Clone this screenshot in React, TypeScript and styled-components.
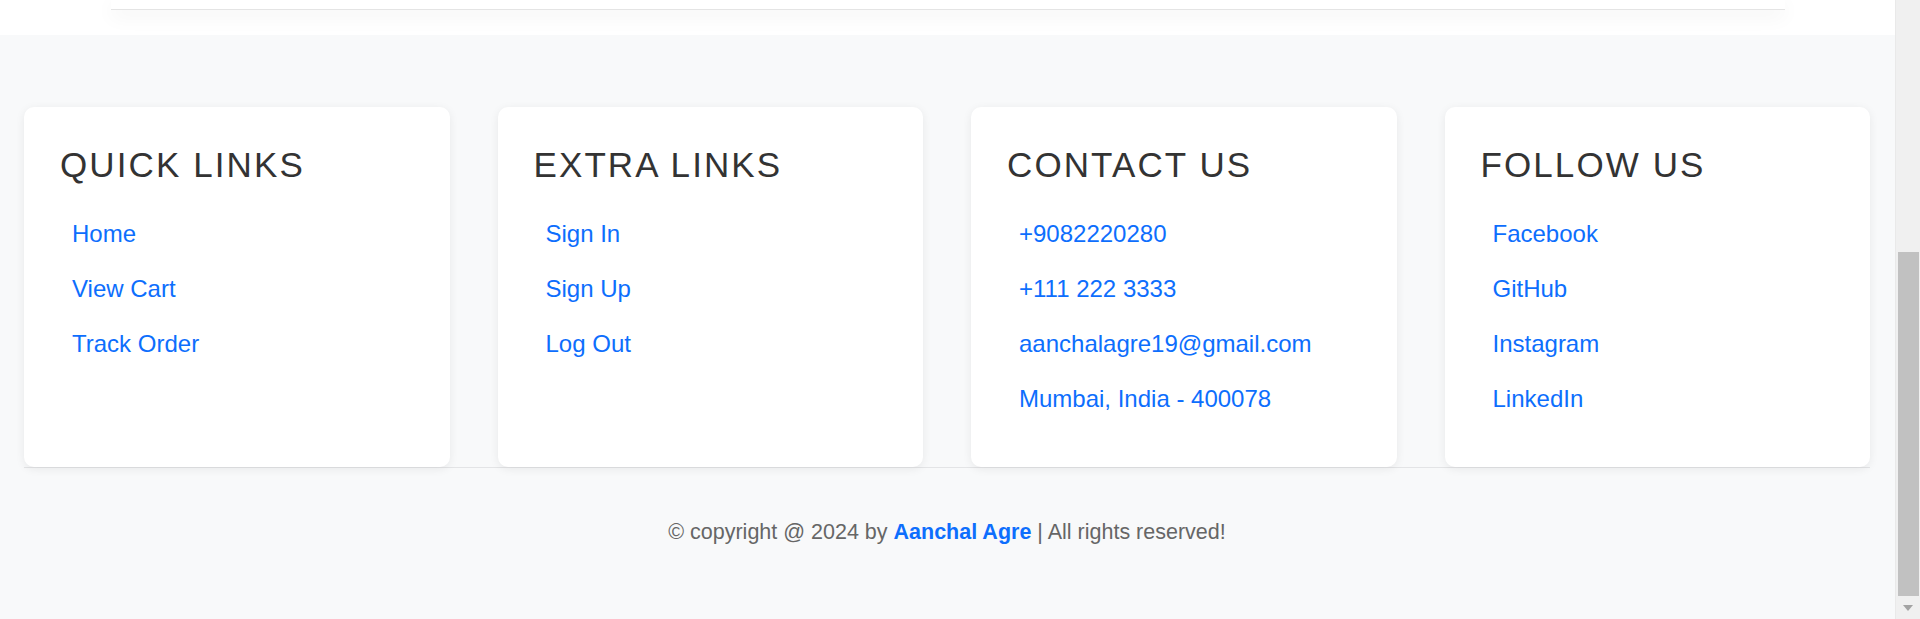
import { createGlobalStyle, styled } from "styled-components"

const GlobalStyle = createGlobalStyle`
  * { box-sizing: border-box; }
  body {
    margin: 0;
    overflow: hidden;
    font-family: "Liberation Sans", Arial, sans-serif;
  }
`

const columns = [
  { title: "quick links", links: ["Home", "View Cart", "Track Order"] },
  { title: "extra links", links: ["Sign In", "Sign Up", "Log Out"] },
  {
    title: "contact us",
    links: ["+9082220280", "+111 222 3333", "aanchalagre19@gmail.com", "Mumbai, India - 400078"],
  },
  { title: "follow us", links: ["Facebook", "GitHub", "Instagram", "LinkedIn"] },
]

export default () => {
  return (
    <>
      <GlobalStyle />
      <Page>
        <Main>
          <TopStrip>
            <TopCard />
          </TopStrip>
          <Footer>
            <BoxContainer>
              {columns.map((col) => (
                <Box key={col.title}>
                  <BoxTitle>{col.title}</BoxTitle>
                  {col.links.map((l) => (
                    <BoxLink key={l} href="#">{l}</BoxLink>
                  ))}
                </Box>
              ))}
            </BoxContainer>
            <Credit>
              © copyright @ 2024 by <span>Aanchal Agre</span> | All rights reserved!
            </Credit>
          </Footer>
        </Main>
        <ScrollTrack>
          <ScrollThumb />
          <ScrollArrow />
        </ScrollTrack>
      </Page>
    </>
  )
}

const Page = styled.div`
  display: flex;
  height: 619px;
  width: 1920px;
`

const Main = styled.div`
  flex: 1;
  display: flex;
  flex-direction: column;
  min-width: 0;
`

const TopStrip = styled.div`
  height: 35px;
  background: #fff;
  padding: 0 110px 0 111px;
`

const TopCard = styled.div`
  height: 10px;
  background: #fff;
  border-bottom: 1px solid #e4e4e4;
  box-shadow: 0 6px 20px rgba(0, 0, 0, 0.06);
`

const Footer = styled.footer`
  flex: 1;
  background: #f8f9fa;
  padding: 72px 25px 0 24px;
`

const BoxContainer = styled.div`
  display: grid;
  grid-template-columns: repeat(4, 1fr);
  gap: 48px;
`

const Box = styled.div`
  background: #fff;
  border-radius: 10px;
  box-shadow: 0 2px 10px rgba(0, 0, 0, 0.07);
  padding: 38px 36px 41px;
  position: relative;
  z-index: 1;
`

const BoxTitle = styled.h3`
  margin: 0 0 21px;
  font-size: 35px;
  line-height: 40px;
  font-weight: 400;
  letter-spacing: 2.1px;
  text-transform: uppercase;
  color: #333;
`

const BoxLink = styled.a`
  display: block;
  padding-left: 12px;
  font-size: 24px;
  line-height: 55px;
  color: #0d6efd;
  text-decoration: none;
`

const Credit = styled.p`
  margin: 0;
  border-top: 1px solid #e3e4e6;
  padding-top: 48px;
  text-align: center;
  font-size: 21.5px;
  line-height: 32px;
  color: #666;

  span {
    color: #0d6efd;
    font-weight: 700;
  }
`

const ScrollTrack = styled.div`
  width: 25px;
  background: #f0f0f0;
  border-left: 1px solid #e9e9e9;
  padding: 252px 1px 0 1px;
  display: flex;
  flex-direction: column;
  align-items: center;
`

const ScrollThumb = styled.div`
  width: 21px;
  height: 344px;
  background: #c1c1c1;
`

const ScrollArrow = styled.div`
  margin-top: 9px;
  width: 0;
  height: 0;
  border-left: 5.5px solid transparent;
  border-right: 5.5px solid transparent;
  border-top: 6px solid #a3a3a3;
`
